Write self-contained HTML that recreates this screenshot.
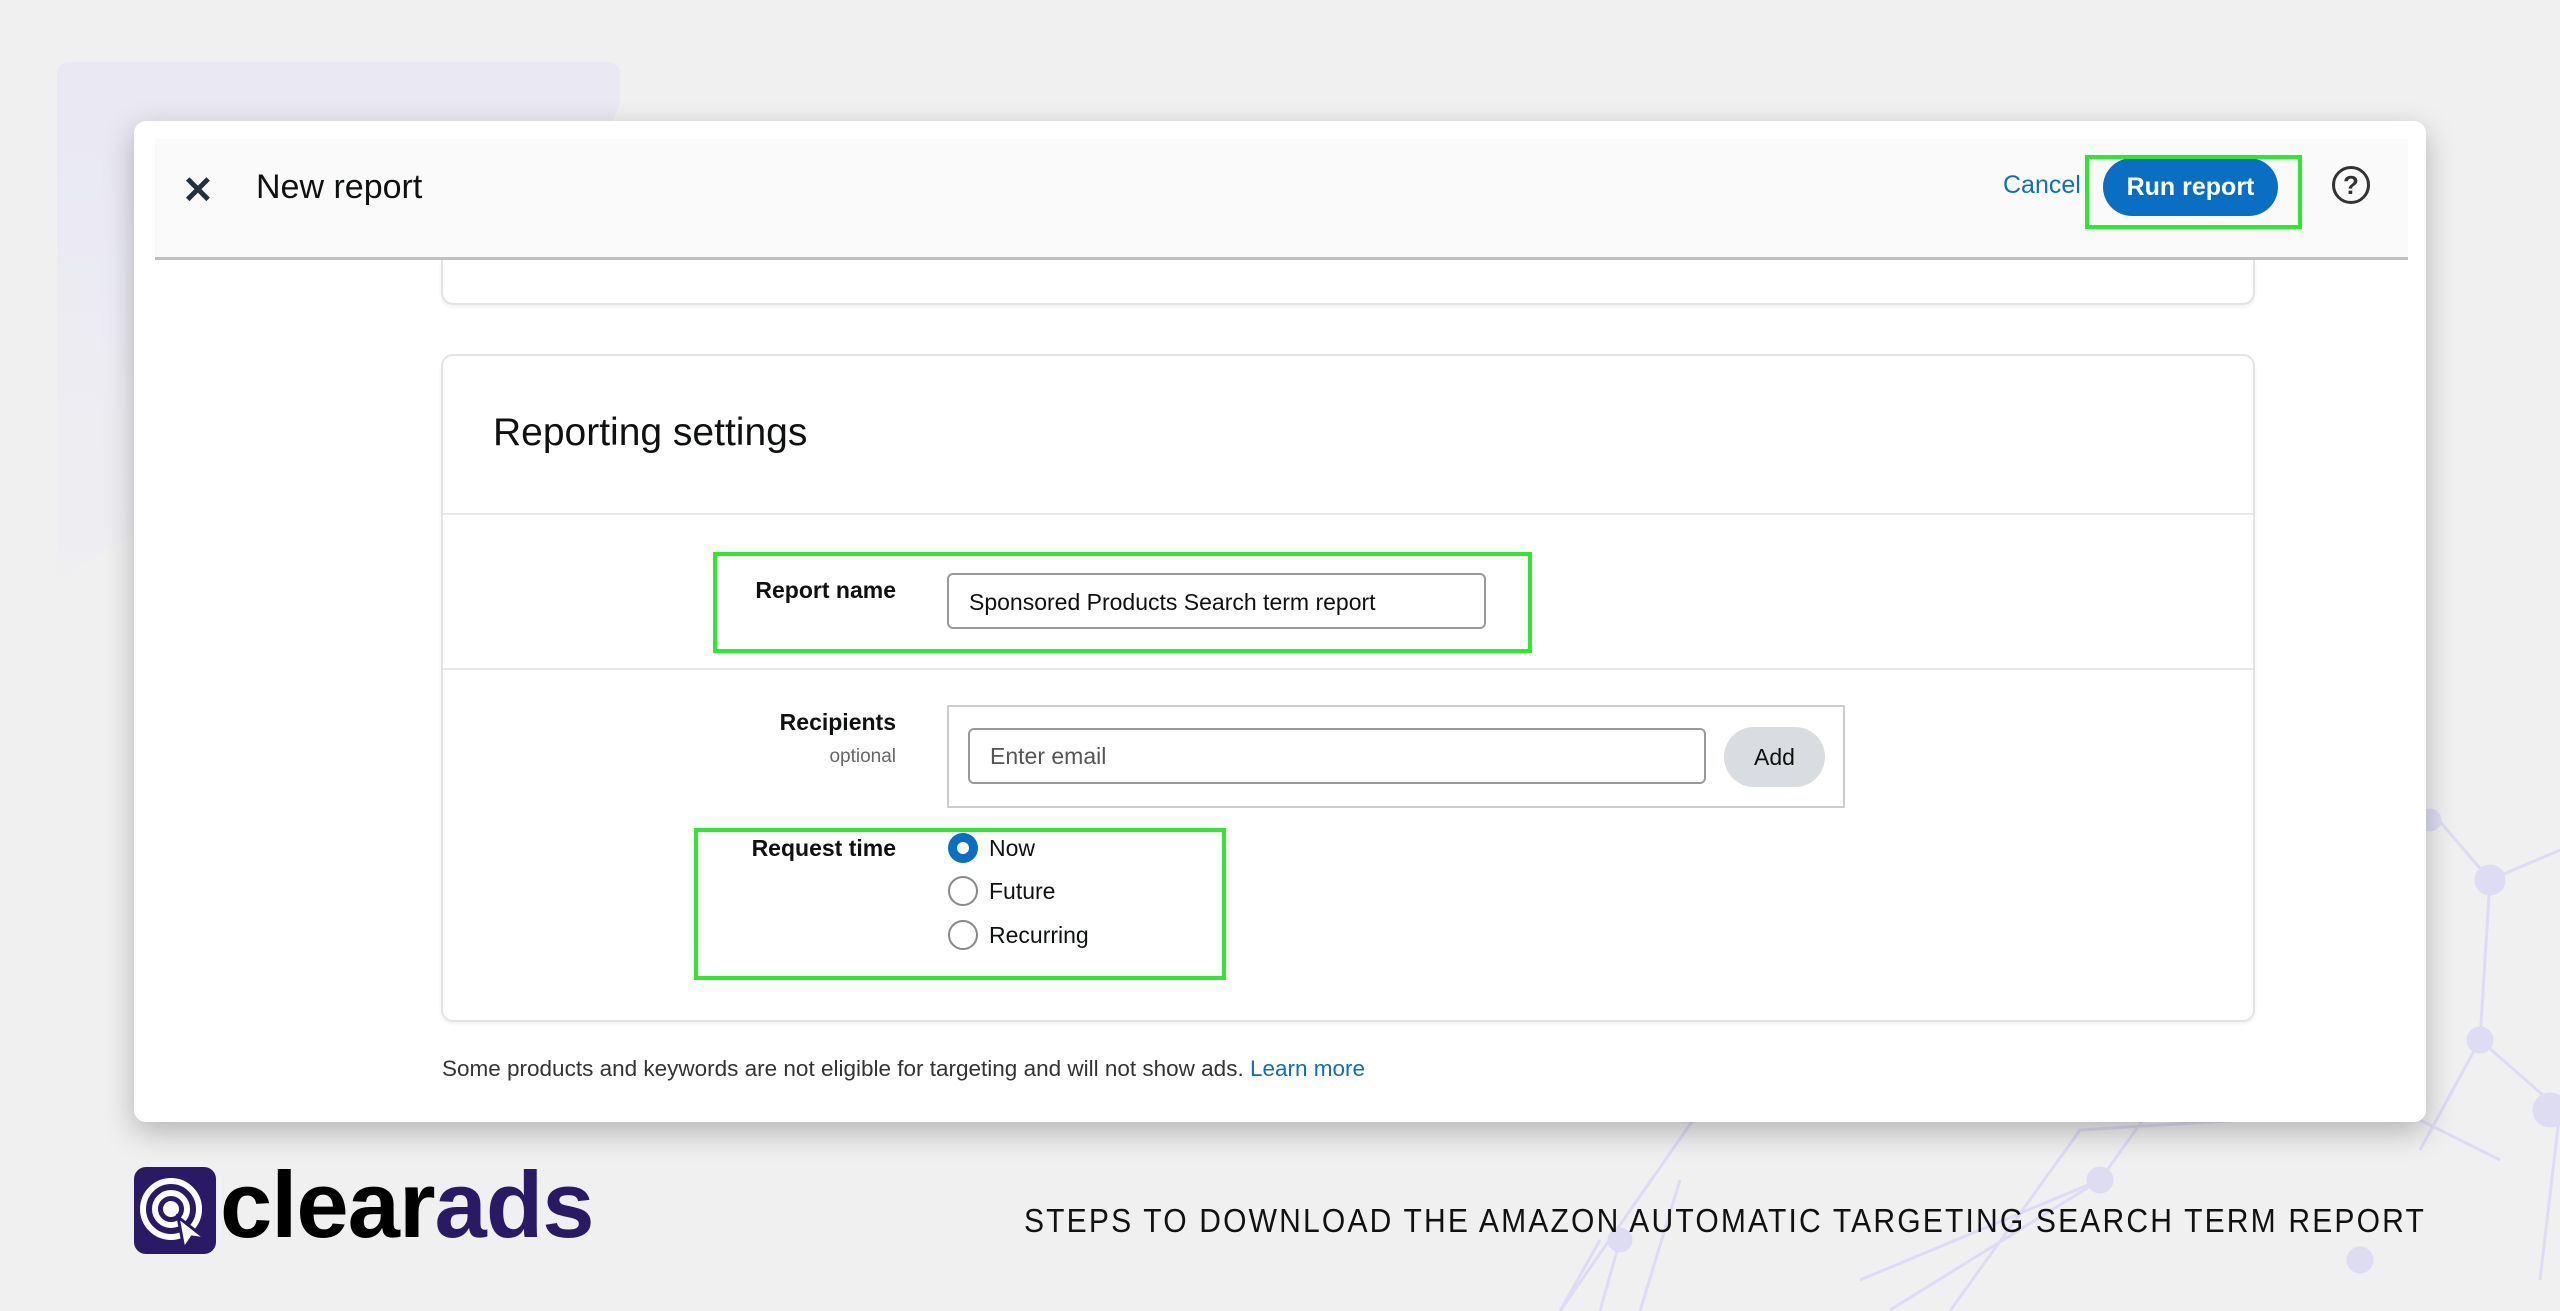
<!DOCTYPE html>
<html><head><meta charset="utf-8"><style>
*{box-sizing:border-box;margin:0;padding:0}
body{width:2560px;height:1311px;background:#f0f0f0;position:relative;overflow:hidden;font-family:"Liberation Sans",sans-serif;color:#0f1111}
.a{position:absolute}
.lbl{font-weight:bold;font-size:23px;text-align:right;width:300px}
.g{border:4px solid #2ee82e}
.rad{width:30px;height:30px;border-radius:50%;border:2px solid #888}
.rt{font-size:23px}
</style></head><body>
<div class="a" style="left:57px;top:62px;width:563px;height:520px;background:linear-gradient(180deg,#e9e8f3,#efeff2);clip-path:polygon(0 0,100% 0,100% 8%,88% 40%,0 100%);border-radius:12px"></div>
<svg class="a" style="left:1500px;top:780px" width="1060" height="531" stroke="#dcdaf3" stroke-width="3" fill="#dcdaf3" opacity="0.9">
<g fill="none"><path d="M930 30 L990 100 L1060 70 M990 100 L980 260 L1060 330 M980 260 L920 370 M1060 330 L1040 500 M650 330 L600 400 L360 500 M600 400 L390 530 M120 460 L100 531 M100 460 L60 531 M200 330 L60 531 M450 531 L580 350 L900 330 L1000 380 M140 531 L180 400"/></g>
<circle cx="990" cy="100" r="14"/><circle cx="980" cy="260" r="12"/><circle cx="1050" cy="330" r="16"/><circle cx="600" cy="400" r="12"/><circle cx="120" cy="460" r="11"/><circle cx="860" cy="480" r="12"/><circle cx="930" cy="40" r="10"/>
</svg>
<div class="a" style="left:134px;top:121px;width:2292px;height:1001px;background:#fff;border-radius:12px;box-shadow:0 10px 30px rgba(0,0,0,.25)"></div>
<div class="a" style="left:155px;top:139px;width:2253px;height:121px;background:#fafafa;border-bottom:3px solid #bfbfbf"></div>
<div class="a" style="left:182px;top:168px;font-size:38px;font-weight:bold;color:#232f3e">✕</div>
<div class="a" style="left:256px;top:168px;font-size:34px">New report</div>
<div class="a" style="left:2003px;top:171px;font-size:25px;color:#0f6fb8">Cancel</div>
<div class="a" style="left:2103px;top:158px;width:175px;height:58px;border-radius:29px;background:#0a6fc2;color:#fff;font-size:25px;font-weight:bold;text-align:center;line-height:58px">Run report</div>
<div class="a g" style="left:2085px;top:155px;width:217px;height:74px"></div>
<div class="a" style="left:2332px;top:166px;width:38px;height:38px;border-radius:50%;border:3px solid #333;text-align:center;font-size:26px;font-weight:bold;line-height:32px;color:#333">?</div>
<div class="a" style="left:441px;top:260px;width:1814px;height:45px;border:2px solid #e3e3e3;border-top:none;border-radius:0 0 12px 12px;box-shadow:0 2px 3px rgba(0,0,0,.06)"></div>
<div class="a" style="left:441px;top:354px;width:1814px;height:668px;border:2px solid #e3e3e3;border-radius:12px;box-shadow:0 2px 3px rgba(0,0,0,.06)"></div>
<div class="a" style="left:493px;top:411px;font-size:39px">Reporting settings</div>
<div class="a" style="left:443px;top:513px;width:1810px;height:2px;background:#e7e7e7"></div>
<div class="a" style="left:443px;top:668px;width:1810px;height:2px;background:#e7e7e7"></div>
<div class="a lbl" style="left:596px;top:577px">Report name</div>
<div class="a" style="left:947px;top:573px;width:539px;height:56px;border:2px solid #999;border-radius:6px;font-size:23px;padding:14px 20px">Sponsored Products Search term report</div>
<div class="a g" style="left:713px;top:552px;width:819px;height:101px"></div>
<div class="a lbl" style="left:596px;top:709px">Recipients</div>
<div class="a" style="left:596px;top:746px;width:300px;text-align:right;font-size:19px;color:#666">optional</div>
<div class="a" style="left:947px;top:705px;width:898px;height:103px;border:2px solid #ccc"></div>
<div class="a" style="left:968px;top:728px;width:738px;height:56px;border:2px solid #999;border-radius:6px;font-size:23px;padding:13px 20px;color:#555">Enter email</div>
<div class="a" style="left:1724px;top:727px;width:101px;height:60px;border-radius:30px;background:#d9dde1;font-size:23px;text-align:center;line-height:60px">Add</div>
<div class="a lbl" style="left:596px;top:835px">Request time</div>
<div class="a rad" style="left:948px;top:833px;border:9px solid #0a6fc2;background:#fff"></div>
<div class="a rt" style="left:989px;top:835px">Now</div>
<div class="a rad" style="left:948px;top:876px"></div>
<div class="a rt" style="left:989px;top:878px">Future</div>
<div class="a rad" style="left:948px;top:920px"></div>
<div class="a rt" style="left:989px;top:922px">Recurring</div>
<div class="a g" style="left:694px;top:828px;width:532px;height:152px"></div>
<div class="a" style="left:442px;top:1056px;font-size:22.5px;color:#333;white-space:nowrap">Some products and keywords are not eligible for targeting and will not show ads. <span style="color:#0f6fb8">Learn more</span></div>
<div class="a" style="left:134px;top:1167px;width:82px;height:87px;background:#2a1a66;border-radius:12px"></div>
<svg class="a" style="left:134px;top:1167px" width="82" height="87" fill="none" stroke="#fff" stroke-width="6"><circle cx="37" cy="42" r="28"/><circle cx="37" cy="42" r="16"/><circle cx="37" cy="42" r="5" fill="#fff"/><path d="M44 50 L50 82 L58 70 L72 72 Z" fill="#fff" stroke="#2a1a66" stroke-width="3"/></svg>
<div class="a" style="left:220px;top:1150px;font-size:94px;font-weight:bold;letter-spacing:-1px;line-height:110px;white-space:nowrap"><span style="color:#000">clear</span><span style="color:#2a1a66">ads</span></div>
<div class="a" style="left:800px;top:1203px;width:1626px;text-align:right;font-size:33.4px;color:#111;white-space:nowrap;transform:scaleX(0.9);transform-origin:right center;letter-spacing:2.4px">STEPS TO DOWNLOAD THE AMAZON AUTOMATIC TARGETING SEARCH TERM REPORT</div>
</body></html>
